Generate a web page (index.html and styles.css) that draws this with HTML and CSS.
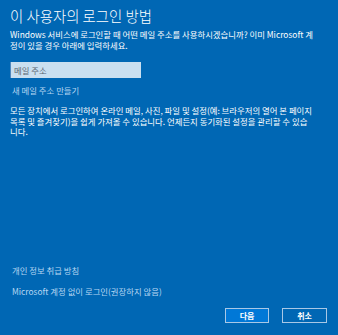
FILE: index.html
```html
<html>
	<head>
		<title>이 사용자의 로그인 방법</title>
		<link rel="stylesheet" href="styles.css">
	</head>
	<body>
		<div class="page">
			<div class="top">
				<p class="header">이 사용자의 로그인 방법</p>
				<p class="text intro">Windows 서비스에 로그인할 때 어떤 메일 주소를 사용하시겠습니까? 이미 Microsoft 계정이 있을 경우 아래에 입력하세요.</p>
				<input type="text" class="mailBox" placeholder="메일 주소"/>
				<a class="link newMail">새 메일 주소 만들기</a>
				<p class="text about">모든 장치에서 로그인하여 온라인 메일, 사진, 파일 및 설정(예: 브라우저의 열어 본 페이지 목록 및 즐겨찾기)을 쉽게 가져올 수 있습니다. 언제든지 동기화된 설정을 관리할 수 있습니다.</p>
			</div>
			<div class="bottom">
				<a class="link privacy">개인 정보 취급 방침</a>
				<a class="link noAccount">Microsoft 계정 없이 로그인(권장하지 않음)</a>
				<div class="buttons">
					<div class="button next">다음</div>
					<div class="button cancel">취소</div>
				</div>
			</div>
		</div>
	</body>
</html>
```

FILE: styles.css
```css
body
{
	margin: 0;
	background-color: #0067b4;
	color: #ffffff;
	font-family: "Noto Sans CJK KR", "Noto Sans", sans-serif;
}
.page
{
	height: 335px;
	display: flex;
	flex-direction: column;
	justify-content: space-between;
	box-sizing: border-box;
	padding: 0 11px 12px 10px;
}
.top
{
	display: flex;
	flex-direction: column;
	align-items: flex-start;
	padding-right: 12px;
}
.header
{
	margin: 6px 0 0 0;
	font-size: 14.4px;
	font-weight: 300;
	line-height: 20px;
}
.text
{
	margin: 0;
	font-size: 8.4px;
	line-height: 10.5px;
}
.intro
{
	margin-top: 3px;
}
.mailBox
{
	margin-top: 12px;
	width: 131px;
	height: 16px;
	box-sizing: border-box;
	border: none;
	border-left: 1px solid #4d87bd;
	background-color: #c9dff0;
	padding: 0 0 0 3px;
	font-family: "Noto Sans CJK KR", sans-serif;
	font-size: 8.4px;
	outline: none;
}
.mailBox::placeholder
{
	color: #5a6670;
}
.link
{
	display: block;
	font-size: 8.4px;
	line-height: 10px;
	color: #b6d6f2;
}
.newMail
{
	margin: 7px 0 0 2px;
}
.about
{
	margin-top: 10px;
}
.bottom
{
	display: flex;
	flex-direction: column;
}
.privacy
{
	margin-left: 2px;
}
.noAccount
{
	margin: 11px 0 0 2px;
}
.buttons
{
	display: flex;
	justify-content: flex-end;
	gap: 13px;
	margin-top: 12px;
}
.button
{
	width: 45px;
	height: 15px;
	box-sizing: border-box;
	border: 1px solid #a9c8e6;
	font-size: 8px;
	font-weight: bold;
	line-height: 13px;
	text-align: center;
}
.next
{
	width: 44px;
	background-color: #0078d7;
}
.cancel
{
	background-color: #0067b4;
}
```
